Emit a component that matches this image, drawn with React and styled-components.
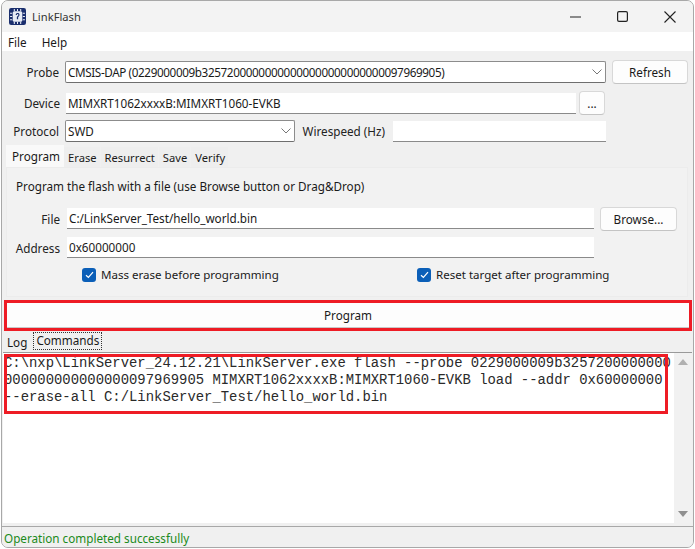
import React from 'react';
import styled, { createGlobalStyle } from 'styled-components';

const Global = createGlobalStyle`
  html, body {
    margin: 0;
    padding: 0;
    background: #ffffff;
  }
  * {
    box-sizing: border-box;
  }
`;

const Win = styled.div`
  width: 695px;
  height: 549px;
  padding: 0 1px 1px 1px;
  font-family: 'Noto Sans', sans-serif;
  font-size: 11.7px;
  color: #1a1a1a;
  overflow: hidden;
`;

const Frame = styled.div`
  height: 100%;
  display: flex;
  flex-direction: column;
  background: #f0f0f0;
  border: 1px solid #a8a8a8;
  border-radius: 7px;
  overflow: hidden;
`;

const TitleBar = styled.div`
  height: 31px;
  flex: none;
  display: flex;
  align-items: center;
  background: #f3f3f3;
  padding-left: 7px;
`;

const TitleText = styled.span`
  margin-left: 6px;
  font-size: 11.2px;
  color: #333;
`;

const WinButtons = styled.div`
  margin-left: auto;
  display: flex;
  align-items: center;
  gap: 36px;
  padding-right: 17px;
`;

const MenuBar = styled.div`
  height: 19px;
  flex: none;
  background: #ffffff;
  display: flex;
  align-items: center;
  gap: 15px;
  padding: 1px 0 0 6px;
`;

const Form = styled.div`
  padding: 8px 5px 0 0;
  display: flex;
  flex-direction: column;
`;

const FormRow = styled.div`
  display: flex;
  align-items: center;
  height: ${({ h }) => h}px;
`;

const Label = styled.span`
  width: ${({ w }) => w}px;
  flex: none;
  text-align: right;
  padding-right: 6px;
  color: #222;
`;

const Select = styled.div`
  width: ${({ w }) => w}px;
  height: 22px;
  flex: none;
  display: flex;
  align-items: center;
  justify-content: space-between;
  padding: 0 3px 0 2px;
  background: #fff;
  border: 1px solid #8c8c8c;
  border-bottom-color: #6e6e6e;
  border-radius: 2px;
  white-space: nowrap;
`;

const ProbeText = styled.span`
  letter-spacing: -0.38px;
`;

const Field = styled.div`
  width: ${({ w }) => w}px;
  height: 21px;
  margin-left: ${({ ml }) => ml || 0}px;
  flex: none;
  display: flex;
  align-items: center;
  padding: 0 2px;
  background: #fff;
  border-bottom: 1px solid #8a8a8a;
  white-space: nowrap;
`;

const Btn = styled.div`
  width: ${({ w }) => w}px;
  height: 24px;
  margin-left: ${({ ml }) => ml || 0}px;
  flex: none;
  display: flex;
  align-items: center;
  justify-content: center;
  background: #fdfdfd;
  border: 1px solid #d8d8d8;
  border-bottom-color: #c4c4c4;
  border-radius: 4px;
`;

const Tabs = styled.div`
  display: flex;
  align-items: flex-end;
  height: 22px;
  margin-top: 4px;
  padding-left: 4px;
`;

const Tab = styled.div`
  height: ${({ active }) => (active ? 22 : 20)}px;
  padding: ${({ active }) => (active ? '0 4px 0 6px' : '1px 3px 0 4px')};
  margin-right: ${({ active }) => (active ? 0 : 1)}px;
  display: flex;
  align-items: center;
  font-size: ${({ active }) => (active ? 11.7 : 11.2)}px;
  background: ${({ active }) => (active ? '#f9f9f9' : '#eeeeee')};
`;

const Panel = styled.div`
  height: 130px;
  margin: 0 5px 0 4px;
  padding: 9px 9px 0 9px;
  background: #f2f2f2;
  border: 1px solid #ececec;
  display: flex;
  flex-direction: column;
`;

const Hint = styled.div`
  height: 18px;
  line-height: 18px;
  margin-bottom: 11px;
`;

const FileRow = styled.div`
  display: flex;
  align-items: center;
  height: 25px;
  margin-bottom: 4px;
  margin-left: -8px;
`;

const FileLabel = styled(Label)`
  width: 59px;
  padding-right: 7px;
`;

const CheckRow = styled.div`
  display: grid;
  grid-template-columns: 335px auto;
  margin: 3px 0 0 66px;
`;

const Check = styled.label`
  display: flex;
  align-items: center;
  gap: 5px;
  font-size: 11.55px;
`;

const Box = styled.span`
  width: 14px;
  height: 14px;
  flex: none;
  display: flex;
  align-items: center;
  justify-content: center;
  background: #0b5fb8;
  border-radius: 3px;
`;

const RedFrame = styled.div`
  margin: 3px 1px 0 2px;
  height: 31px;
  flex: none;
  border: 3px solid #ee1c25;
  display: flex;
`;

const ProgramBtn = styled.div`
  flex: 1;
  display: flex;
  align-items: center;
  justify-content: center;
  background: #fdfdfd;
  border-bottom: 1px solid #c8c8c8;
`;

const LogTabs = styled.div`
  height: 21px;
  flex: none;
  display: flex;
  align-items: flex-end;
  padding: 0 0 2px 5px;
`;

const LogTab = styled.div`
  height: 16px;
  padding-right: 6px;
  display: flex;
  align-items: center;
`;

const FocusTab = styled.div`
  height: 18px;
  padding: 0 3px 2px 3px;
  display: flex;
  align-items: center;
  outline: 1px dotted #333;
  outline-offset: -1px;
`;

const Console = styled.div`
  flex: 1;
  margin: 0 1px 3px 1px;
  display: flex;
  background: #fff;
  border-top: 1px solid #9a9a9a;
  min-height: 0;
`;

const ConsoleBody = styled.div`
  flex: 1;
  position: relative;
  padding: 2px 0 0 1px;
`;

const CommandText = styled.pre`
  margin: 0;
  font-family: 'Liberation Mono', monospace;
  font-size: 13.9px;
  line-height: 16.8px;
  color: #2a2a2a;
`;

// red annotation drawn over the command text, it hides part of the first letter
const RedMark = styled.div`
  position: absolute;
  left: 1px;
  top: 1px;
  width: 664px;
  height: 60px;
  border: 3px solid #ee1c25;
`;

const ScrollBar = styled.div`
  width: 18px;
  flex: none;
  display: flex;
  flex-direction: column;
  align-items: center;
  justify-content: space-between;
  padding: 6px 0 6px;
  background: #f1f1f1;
`;

const Arrow = styled.span`
  width: 0;
  height: 0;
  border-left: 5px solid transparent;
  border-right: 5px solid transparent;
  ${({ down }) =>
    down ? 'border-top: 6px solid #8f8f8f;' : 'border-bottom: 6px solid #b0b0b0;'}
`;

const StatusBar = styled.div`
  height: 21px;
  flex: none;
  display: flex;
  align-items: center;
  padding: 2px 0 0 2px;
  background: #f0f0f0;
  border-top: 1px solid #a8a8a8;
  color: #1b8a1b;
`;

const Chevron = () => (
  <svg width="10" height="6" viewBox="0 0 10 6" fill="none" stroke="#777" strokeWidth="1">
    <path d="M0.5 0.5 L5 5 L9.5 0.5" />
  </svg>
);

const AppIcon = () => (
  <svg width="17" height="17" viewBox="0 0 16 16">
    <rect width="16" height="16" rx="2" fill="#1b2f6e" />
    <rect x="3.5" y="3" width="9" height="10" rx="1.5" fill="#e8ecf5" />
    <path d="M5 1v2M8 1v2M11 1v2M5 13v2M8 13v2M11 13v2M1 5h2M1 8h2M1 11h2M13 5h2M13 8h2M13 11h2" stroke="#e8ecf5" strokeWidth="1" />
    <path d="M6.3 6.5a1.8 1.8 0 1 1 3 1.3L8.6 8.6V10.5H7.4V8.2L8.4 7.2a.7.7 0 1 0-1-.7z" fill="#1b2f6e" />
  </svg>
);

const Tick = () => (
  <svg width="9" height="8" viewBox="0 0 9 8" fill="none" stroke="#ffffff" strokeWidth="1.2">
    <path d="M1 4.2 L3.4 6.5 L8 1.2" />
  </svg>
);

const App = () => {
  return (
    <Win>
      <Global />
      <Frame>
        <TitleBar>
          <AppIcon />
          <TitleText>LinkFlash</TitleText>
          <WinButtons>
            <svg width="11" height="2" viewBox="0 0 11 2"><path d="M0 1h11" stroke="#222" strokeWidth="1.2" /></svg>
            <svg width="11" height="11" viewBox="0 0 11 11" fill="none"><rect x="0.6" y="0.6" width="9.8" height="9.8" rx="1.4" stroke="#222" strokeWidth="1.2" /></svg>
            <svg width="12" height="12" viewBox="0 0 12 12" fill="none"><path d="M0.5 0.5l11 11M11.5 0.5l-11 11" stroke="#222" strokeWidth="1.1" /></svg>
          </WinButtons>
        </TitleBar>
        <MenuBar>
          <span>File</span>
          <span>Help</span>
        </MenuBar>
        <Form>
          <FormRow h={26}>
            <Label w={63}>Probe</Label>
            <Select w={541}>
              <ProbeText>CMSIS-DAP (0229000009b32572000000000000000000000000097969905)</ProbeText>
              <Chevron />
            </Select>
            <Btn w={76} ml={6}>Refresh</Btn>
          </FormRow>
          <FormRow h={36}>
            <Label w={64}>Device</Label>
            <Field w={510}>MIMXRT1062xxxxB:MIMXRT1060-EVKB</Field>
            <Btn w={26} ml={3}>...</Btn>
          </FormRow>
          <FormRow h={20}>
            <Label w={63}>Protocol</Label>
            <Select w={230}>
              <span>SWD</span>
              <Chevron />
            </Select>
            <Label w={96}>Wirespeed (Hz)</Label>
            <Field w={213} ml={2} />
          </FormRow>
        </Form>
        <Tabs>
          <Tab active>Program</Tab>
          <Tab>Erase</Tab>
          <Tab>Resurrect</Tab>
          <Tab>Save</Tab>
          <Tab>Verify</Tab>
        </Tabs>
        <Panel>
          <Hint>Program the flash with a file (use Browse button or Drag&amp;Drop)</Hint>
          <FileRow>
            <FileLabel>File</FileLabel>
            <Field w={527}>C:/LinkServer_Test/hello_world.bin</Field>
            <Btn w={77} ml={6}>Browse...</Btn>
          </FileRow>
          <FileRow>
            <FileLabel>Address</FileLabel>
            <Field w={527}>0x60000000</Field>
          </FileRow>
          <CheckRow>
            <Check><Box><Tick /></Box>Mass erase before programming</Check>
            <Check><Box><Tick /></Box>Reset target after programming</Check>
          </CheckRow>
        </Panel>
        <RedFrame>
          <ProgramBtn>Program</ProgramBtn>
        </RedFrame>
        <LogTabs>
          <LogTab>Log</LogTab>
          <FocusTab>Commands</FocusTab>
        </LogTabs>
        <Console>
          <ConsoleBody>
            <CommandText>{`C:\\nxp\\LinkServer_24.12.21\\LinkServer.exe flash --probe 0229000009b3257200000000
000000000000000097969905 MIMXRT1062xxxxB:MIMXRT1060-EVKB load --addr 0x60000000
--erase-all C:/LinkServer_Test/hello_world.bin`}</CommandText>
            <RedMark />
          </ConsoleBody>
          <ScrollBar>
            <Arrow />
            <Arrow down />
          </ScrollBar>
        </Console>
        <StatusBar>Operation completed successfully</StatusBar>
      </Frame>
    </Win>
  );
};

export default App;
